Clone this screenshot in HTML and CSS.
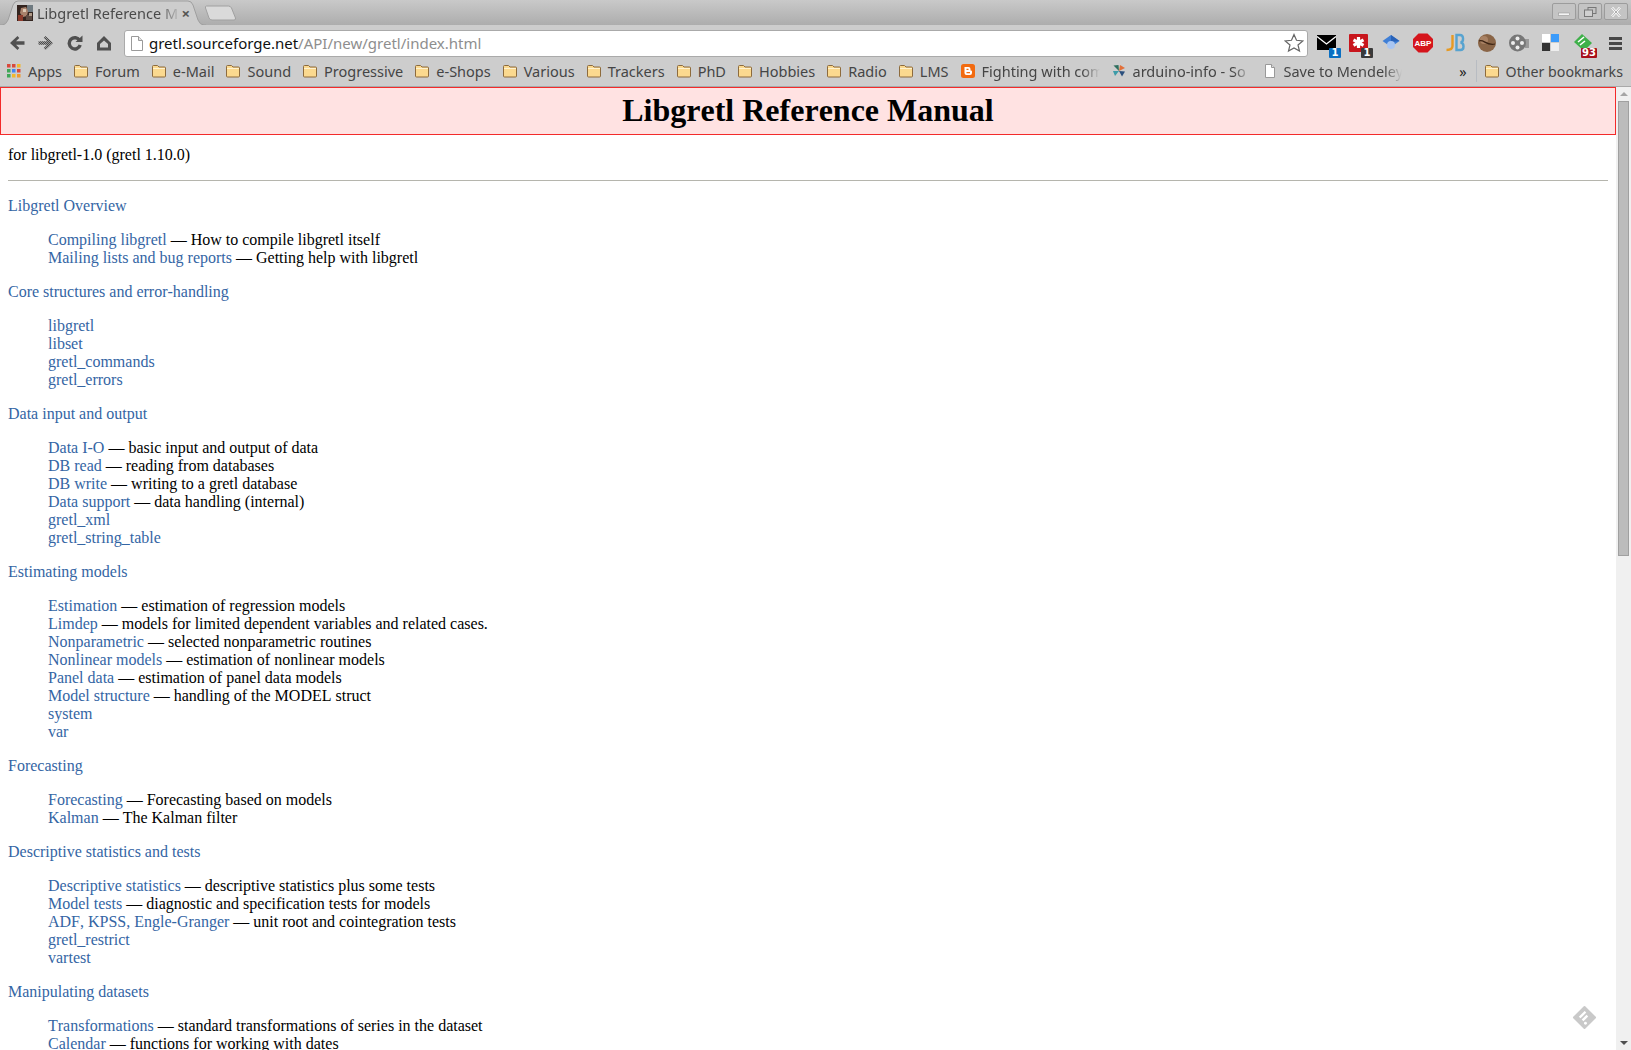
FILE: index.html

```html
<!DOCTYPE html>
<html lang="en">
<head>
  <meta charset="UTF-8" />
  <title>Libgretl Reference Manual</title>
  <link rel="stylesheet" href="styles.css">
</head>
<body>
  <div class="tabstrip">
    <div class="tab">
      <svg class="tab-shape" viewBox="0 0 208 25"><path d="M0 25h2q4 0 6-5l5-15q1.500-4 5-4h170q3.500 0 5 4l5 15q2 5 6 5h2" fill="#cdcdcd" stroke="#9f9f9f"/></svg>
      <svg class="favicon" viewBox="0 0 16 16"><rect width="16" height="16" fill="#33241f"/><rect x="10" width="6" height="7" fill="#6f7a80"/><path d="M4 3l5-1 2 4-1 5-4 1-3-4z" fill="#a9826c"/><rect x="6" y="4" width="3" height="3" fill="#dcc8b4"/><rect x="1" y="10" width="5" height="6" fill="#8c3b2c"/><rect x="9" y="10" width="6" height="5" fill="#5c4a42"/><rect x="12" y="8" width="3" height="3" fill="#b09a88"/></svg>
      <span class="tab-title">Libgretl Reference M</span>
      <span class="tab-close">×</span>
    </div>
    <svg class="newtab" viewBox="0 0 32 16"><path d="M1.500 1h22q2 0 3 2l4 10q.5 2-1.500 2H7q-2 0-3-2L.5 3q-.5-2 1-2z" fill="#dadada" stroke="#a0a0a0"/></svg>
    <div class="winbtns">
      <span class="winbtn"><svg viewBox="0 0 14 10"><rect x="1.500" y="6" width="11" height="2.500" fill="#f4f4f4" stroke="#8a8a8a" stroke-width=".5"/></svg></span>
      <span class="winbtn"><svg viewBox="0 0 14 10"><rect x="5" y=".5" width="8" height="6" fill="none" stroke="#777"/><rect x="1.500" y="3" width="8" height="6.500" fill="#d0d0d0" stroke="#777"/></svg></span>
      <span class="winbtn"><svg viewBox="0 0 14 10"><path d="M3 0.500l8 9M11 0.500l-8 9" stroke="#fff" stroke-width="2.400"/><path d="M3 0.500l8 9M11 0.500l-8 9" stroke="#888" stroke-width=".7"/></svg></span>
    </div>
  </div>

  <div class="toolbar">
    <svg class="navbtn" viewBox="0 0 16 16"><path d="M8.500 1L1 8l7.500 7 1.800-2L7 9.800h8.500V6.200H7L10.300 3z" fill="#505050"/></svg>
    <svg class="navbtn" viewBox="0 0 16 16">
      <defs><pattern id="dither" width="2" height="2" patternUnits="userSpaceOnUse"><rect width="2" height="2" fill="#9c9c9c"/><rect width="1" height="1" fill="#4a4a4a"/><rect x="1" y="1" width="1" height="1" fill="#4a4a4a"/></pattern></defs>
      <path d="M7.500 1L15 8l-7.500 7-1.800-2L9 9.800H.5V6.200H9L5.700 3z" fill="url(#dither)"/>
    </svg>
    <svg class="navbtn" viewBox="0 0 16 16"><path d="M12.700 5.500A5.600 5.600 0 1 0 13.200 10" fill="none" stroke="#505050" stroke-width="3.400"/><path d="M8.500 7h7V.5z" fill="#505050"/></svg>
    <svg class="navbtn" viewBox="0 0 16 16"><path d="M8 1L1 8v7.500h14V8z" fill="#505050"/><path d="M8 5.500L4 9v3.500h8V9z" fill="#cdcdcd"/></svg>
    <div class="omnibox">
      <svg class="page-icon" viewBox="0 0 12 15"><path d="M.5.5h7l4 4v10H.5z" fill="#fff" stroke="#9a9a9a"/><path d="M7.500.5v4h4" fill="#e4e4e4" stroke="#9a9a9a"/></svg>
      <span class="url"><span class="url-host">gretl.sourceforge.net</span>/API/new/gretl/index.html</span>
      <svg class="star" viewBox="0 0 20 20"><path d="M10 1.500l2.500 5.800 6.300.6-4.800 4.100 1.500 6.100L10 15l-5.500 3.100L6 12 1.200 7.900l6.300-.6z" fill="#fff" stroke="#666" stroke-width="1.200"/></svg>
    </div>
    <div class="extensions">
      <span class="ext">
        <svg viewBox="0 0 22 20"><rect x="1" y="2" width="19" height="15" fill="#000"/><path d="M1 3.500l9.500 7.500L20 3.500" fill="none" stroke="#fff" stroke-width="1.300"/></svg>
        <span class="ext-badge badge-blue">1</span>
      </span>
      <span class="ext">
        <svg viewBox="0 0 22 20"><rect x="1" y="1" width="19" height="18" rx="1" fill="#c8161d"/><path d="M10.500 4v11M5.500 6.800l10 5.500M15.500 6.800l-10 5.500" stroke="#fff" stroke-width="3.200"/></svg>
        <span class="ext-badge badge-dark">1</span>
      </span>
      <span class="ext">
        <svg viewBox="0 0 22 20"><path d="M11 2l8.500 6-8.500 6-8.500-6z" fill="#3f7fd6"/><path d="M11 2l8.500 6-8.500 1z" fill="#2a63b8"/><circle cx="11" cy="12" r="4" fill="#a9c6f2"/></svg>
      </span>
      <span class="ext">
        <svg viewBox="0 0 22 20"><path d="M6.500.5h9l5.500 5.500v8l-5.500 5.500h-9L1 14V6z" fill="#d5151c"/><text class="abp" x="11" y="13" text-anchor="middle">ABP</text></svg>
      </span>
      <span class="ext">
        <svg viewBox="0 0 22 20"><path d="M8.500 2v11c0 3-2 4-6 4" fill="none" stroke="#e79a22" stroke-width="2.400"/><path d="M12.500 2v15h4c4 0 4-7 0-7.500 3.500-.5 3.500-7.500-.5-7.500z" fill="none" stroke="#57a3d0" stroke-width="2.400"/></svg>
      </span>
      <span class="ext">
        <svg viewBox="0 0 22 20"><circle cx="11" cy="10" r="9" fill="#8a6547"/><circle cx="8" cy="7" r="4" fill="#a98264"/><path d="M3 8c5-2 7 5 16 3" fill="none" stroke="#3d2414" stroke-width="1.200"/></svg>
      </span>
      <span class="ext">
        <svg viewBox="0 0 22 20"><path d="M15 6h6v9h-4z" fill="#9a9a9a"/><circle cx="9.500" cy="10" r="8.500" fill="#777"/><circle cx="9.500" cy="5.500" r="2" fill="#eee"/><circle cx="9.500" cy="14.500" r="2" fill="#eee"/><circle cx="5" cy="10" r="2" fill="#eee"/><circle cx="14" cy="10" r="2" fill="#eee"/></svg>
      </span>
      <span class="ext">
        <svg viewBox="0 0 22 20"><rect x="2" y="1" width="8" height="8" fill="#fff"/><rect x="11" y="1" width="8" height="8" fill="#3b9bfa"/><rect x="2" y="10" width="8" height="8" fill="#333"/><rect x="11" y="10" width="8" height="8" fill="#eee"/></svg>
      </span>
      <span class="ext">
        <svg viewBox="0 0 22 20"><path d="M10 1l10 9-8 8-10-9z" fill="#3fb04a"/><path d="M6 9l6-5M8 12l5-4" stroke="#fff" stroke-width="1.600"/></svg>
        <span class="ext-badge badge-red">93</span>
      </span>
    </div>
    <div class="hamburger"><span></span><span></span><span></span></div>
  </div>

  <div class="bookmarks">
    <a class="bm">
      <svg class="bm-icon" viewBox="0 0 14 14"><rect width="3.500" height="3.500" fill="#d9483b"/><rect x="5" width="3.500" height="3.500" fill="#d9483b"/><rect x="10" width="3.500" height="3.500" fill="#f1b82d"/><rect y="5" width="3.500" height="3.500" fill="#3fa757"/><rect x="5" y="5" width="3.500" height="3.500" fill="#4285f4"/><rect x="10" y="5" width="3.500" height="3.500" fill="#d9483b"/><rect y="10" width="3.500" height="3.500" fill="#3fa757"/><rect x="5" y="10" width="3.500" height="3.500" fill="#f1b82d"/><rect x="10" y="10" width="3.500" height="3.500" fill="#f19a2d"/></svg>
      Apps
    </a>
    <a class="bm"><svg class="bm-icon"><use href="#folder"/></svg>Forum</a>
    <a class="bm"><svg class="bm-icon"><use href="#folder"/></svg>e-Mail</a>
    <a class="bm"><svg class="bm-icon"><use href="#folder"/></svg>Sound</a>
    <a class="bm"><svg class="bm-icon"><use href="#folder"/></svg>Progressive</a>
    <a class="bm"><svg class="bm-icon"><use href="#folder"/></svg>e-Shops</a>
    <a class="bm"><svg class="bm-icon"><use href="#folder"/></svg>Various</a>
    <a class="bm"><svg class="bm-icon"><use href="#folder"/></svg>Trackers</a>
    <a class="bm"><svg class="bm-icon"><use href="#folder"/></svg>PhD</a>
    <a class="bm"><svg class="bm-icon"><use href="#folder"/></svg>Hobbies</a>
    <a class="bm"><svg class="bm-icon"><use href="#folder"/></svg>Radio</a>
    <a class="bm"><svg class="bm-icon"><use href="#folder"/></svg>LMS</a>
    <a class="bm"><svg class="bm-icon" viewBox="0 0 14 14"><rect width="14" height="14" rx="2.500" fill="#f26a0f"/><path d="M3.500 3h4q2 0 2 2v1.500h.5q1 0 1 1V9q0 2-2 2H5.500q-2 0-2-2z" fill="#fff"/><path d="M5.500 5.300h2M5.500 8.700h3.500" stroke="#f26a0f" stroke-width="1.200"/></svg><span class="bm-fade bm-fade-blog">Fighting with com</span></a>
    <a class="bm"><svg class="bm-icon" viewBox="0 0 14 14"><path d="M7 7L1.500 1.500 6.500 1z" fill="#2f6f5e"/><path d="M7 7l1-6 5 3z" fill="#e2703a"/><path d="M7 7l-6 0 2 5z" fill="#3d9ca8"/><path d="M7 7l6 .5-3 5z" fill="#2b4f7d"/></svg><span class="bm-fade bm-fade-ard">arduino-info - So</span></a>
    <a class="bm"><svg class="bm-icon" viewBox="0 0 14 14"><path d="M2.500.5h6l3 3v10h-9z" fill="#fff" stroke="#999"/><path d="M8.500.5v3h3" fill="#ddd" stroke="#999"/></svg><span class="bm-fade bm-fade-men">Save to Mendeley</span></a>
    <span class="bm-more">»</span>
    <a class="bm bm-other"><svg class="bm-icon"><use href="#folder"/></svg>Other bookmarks</a>
  </div>

  <svg class="defs" width="0" height="0">
    <symbol id="folder" viewBox="0 0 14 14">
      <path d="M1.500 1.500h4l1.500 1.500h5.500q1 0 1 1v8q0 1-1 1h-11q-1 0-1-1V2.500q0-1 1-1z" fill="#fbd98f" stroke="#8d6b3d"/>
      <path d="M1 4.500h12" stroke="#fff2cf"/>
    </symbol>
  </svg>

  <div class="viewport">
    <div class="page">
      <div class="titlebox"><h1>Libgretl Reference Manual</h1></div>
      <div class="content">
        <p class="version">for libgretl-1.0 (gretl 1.10.0)</p>
        <hr>
        <dl class="toc">
          <dt><a>Libgretl Overview</a></dt>
          <dd><dl>
            <dt><a>Compiling libgretl</a> — How to compile libgretl itself</dt>
            <dt><a>Mailing lists and bug reports</a> — Getting help with libgretl</dt>
          </dl></dd>
          <dt><a>Core structures and error-handling</a></dt>
          <dd><dl>
            <dt><a>libgretl</a></dt>
            <dt><a>libset</a></dt>
            <dt><a>gretl_commands</a></dt>
            <dt><a>gretl_errors</a></dt>
          </dl></dd>
          <dt><a>Data input and output</a></dt>
          <dd><dl>
            <dt><a>Data I-O</a> — basic input and output of data</dt>
            <dt><a>DB read</a> — reading from databases</dt>
            <dt><a>DB write</a> — writing to a gretl database</dt>
            <dt><a>Data support</a> — data handling (internal)</dt>
            <dt><a>gretl_xml</a></dt>
            <dt><a>gretl_string_table</a></dt>
          </dl></dd>
          <dt><a>Estimating models</a></dt>
          <dd><dl>
            <dt><a>Estimation</a> — estimation of regression models</dt>
            <dt><a>Limdep</a> — models for limited dependent variables and related cases.</dt>
            <dt><a>Nonparametric</a> — selected nonparametric routines</dt>
            <dt><a>Nonlinear models</a> — estimation of nonlinear models</dt>
            <dt><a>Panel data</a> — estimation of panel data models</dt>
            <dt><a>Model structure</a> — handling of the MODEL struct</dt>
            <dt><a>system</a></dt>
            <dt><a>var</a></dt>
          </dl></dd>
          <dt><a>Forecasting</a></dt>
          <dd><dl>
            <dt><a>Forecasting</a> — Forecasting based on models</dt>
            <dt><a>Kalman</a> — The Kalman filter</dt>
          </dl></dd>
          <dt><a>Descriptive statistics and tests</a></dt>
          <dd><dl>
            <dt><a>Descriptive statistics</a> — descriptive statistics plus some tests</dt>
            <dt><a>Model tests</a> — diagnostic and specification tests for models</dt>
            <dt><a>ADF, KPSS, Engle-Granger</a> — unit root and cointegration tests</dt>
            <dt><a>gretl_restrict</a></dt>
            <dt><a>vartest</a></dt>
          </dl></dd>
          <dt><a>Manipulating datasets</a></dt>
          <dd><dl>
            <dt><a>Transformations</a> — standard transformations of series in the dataset</dt>
            <dt><a>Calendar</a> — functions for working with dates</dt>
          </dl></dd>
        </dl>
      </div>
      <svg class="feedly" viewBox="0 0 26 26"><path d="M13 2l11 11-11 11L2 13z" fill="#c9c9c9" stroke="#c9c9c9" stroke-width="2" stroke-linejoin="round"/><path d="M8 13l6-6M11 16l5-5" stroke="#fff" stroke-width="2.500"/><circle cx="14" cy="19" r="1.500" fill="#fff"/></svg>
    </div>
    <div class="scrollbar">
      <div class="sb-arrow sb-up"></div>
      <div class="sb-track"><div class="sb-thumb"></div></div>
      <div class="sb-arrow sb-down"></div>
    </div>
  </div>
</body>
</html>
```

FILE: styles.css

```css
html, body {
  margin: 0;
  height: 100%;
  overflow: hidden;
}
body {
  display: flex;
  flex-direction: column;
  background: #fff;
  font-family: 'Liberation Serif', serif;
  font-size: 16px;
  color: #000;
}

/* browser chrome */
.tabstrip {
  height: 25px;
  flex: none;
  display: flex;
  align-items: flex-end;
  background: linear-gradient(#c9c9c9, #adadad);
  font-family: 'Noto Sans', sans-serif;
}
.tab {
  width: 208px;
  height: 25px;
  padding: 0 18px 0 17px;
  box-sizing: border-box;
  display: flex;
  align-items: center;
  position: relative;
}
.tab-shape {
  position: absolute;
  left: 0;
  top: 0;
  width: 208px;
  height: 25px;
}
.favicon {
  width: 16px;
  height: 16px;
  margin-right: 4px;
  flex: none;
  position: relative;
}
.tab-title {
  flex: 1;
  position: relative;
  white-space: nowrap;
  font-size: 14.500px;
  color: #4a4a4a;
  -webkit-mask-image: linear-gradient(to right, #000 85%, transparent);
  mask-image: linear-gradient(to right, #000 85%, transparent);
}
.tab-close {
  position: relative;
  font-size: 15px;
  font-weight: 700;
  color: #555;
}
.newtab {
  width: 32px;
  height: 16px;
  margin: 0 0 4px -3px;
}
.winbtns {
  margin-left: auto;
  align-self: flex-start;
  margin-top: 3px;
  margin-right: 3px;
  display: flex;
  gap: 2px;
}
.winbtn {
  width: 24px;
  height: 17px;
  box-sizing: border-box;
  border: 1px solid #9c9c9c;
  border-radius: 2px;
  background: #c4c4c4;
  display: flex;
  align-items: center;
  justify-content: center;
}
.winbtn svg {
  width: 14px;
  height: 10px;
}

.toolbar {
  height: 33px;
  flex: none;
  padding: 3px 0 0 9px;
  box-sizing: border-box;
  display: flex;
  align-items: center;
  background: #cdcdcd;
}
.navbtn {
  width: 16px;
  height: 16px;
  margin-right: 13px;
  flex: none;
}
.omnibox {
  width: 1184px;
  height: 27px;
  margin-left: -1px;
  padding: 0 3px 0 6px;
  box-sizing: border-box;
  background: #fff;
  border: 1px solid #aaa;
  border-radius: 3px;
  display: flex;
  align-items: center;
  font-family: 'Noto Sans', sans-serif;
  font-size: 15px;
  color: #8e8e8e;
}
.page-icon {
  width: 12px;
  height: 15px;
  margin-right: 6px;
}
.url {
  flex: 1;
}
.url-host {
  color: #111;
}
.star {
  width: 20px;
  height: 20px;
}
.extensions {
  display: flex;
  margin-left: 3px;
}
.ext {
  width: 32px;
  height: 26px;
  position: relative;
  display: flex;
  align-items: center;
  justify-content: center;
}
.ext svg {
  width: 22px;
  height: 20px;
}
.abp {
  font: 700 8px 'Liberation Sans', sans-serif;
  fill: #fff;
}
.ext-badge {
  position: absolute;
  right: 2px;
  bottom: -2px;
  min-width: 10px;
  height: 10px;
  padding: 0 1px;
  font: 700 10px/10px 'DejaVu Sans', sans-serif;
  color: #fff;
  text-align: center;
  border-radius: 1px;
}
.badge-blue { background: #0a6fc2; }
.badge-dark { background: #3a3a3a; }
.badge-red { background: #a8101c; }
.hamburger {
  margin-left: 10px;
  display: flex;
  flex-direction: column;
  gap: 2px;
}
.hamburger span {
  width: 13px;
  height: 3px;
  background: #484848;
  display: block;
}

.bookmarks {
  height: 29px;
  flex: none;
  display: flex;
  align-items: center;
  gap: 12px;
  background: #cdcdcd;
  border-bottom: 1px solid #a9a9a9;
  padding: 0 0 2px 7px;
  box-sizing: border-box;
  font-family: 'Noto Sans', sans-serif;
  font-size: 14.500px;
  white-space: nowrap;
}
.bm {
  display: flex;
  align-items: center;
  gap: 7px;
  color: #454545;
}
.bm-icon {
  width: 14px;
  height: 14px;
  flex: none;
}
.bm-fade {
  display: block;
  -webkit-mask-image: linear-gradient(to right, #000 85%, transparent);
  mask-image: linear-gradient(to right, #000 85%, transparent);
}
.bm-fade-blog { width: 118px; }
.bm-fade-ard { width: 118px; }
.bm-fade-men { width: 118px; }
.bm-more {
  margin-left: auto;
  color: #222;
  padding-right: 9px;
  border-right: 1px solid #b8bcc2;
  height: 22px;
  line-height: 22px;
}
.bm-other {
  margin-left: -4px;
  padding-right: 8px;
  font-size: 14.200px;
}
.defs {
  position: absolute;
}

/* page */
.viewport {
  flex: 1;
  min-height: 0;
  display: flex;
}
.page {
  flex: 1;
  min-width: 0;
  overflow: hidden;
  position: relative;
  font-kerning: none;
}
.titlebox {
  background: #ffe2e2;
  border: 1px solid #f32a2a;
  height: 48px;
  padding-bottom: 2px;
  box-sizing: border-box;
  display: flex;
  align-items: center;
  justify-content: center;
}
.titlebox h1 {
  margin: 0;
  font-size: 32px;
  font-weight: 700;
}
.content {
  padding: 0 8px;
}
.version {
  margin: 11px 0 16px;
}
hr {
  margin: 0;
  border: none;
  border-top: 1px solid #b5b5ad;
}
.toc {
  margin: 16px 0;
}
.toc dl {
  margin: 16px 0;
}
.toc dd {
  margin-left: 40px;
}
.toc dt {
  line-height: 18px;
}
.toc a {
  color: #3465a4;
  text-decoration: none;
}
.feedly {
  position: absolute;
  right: 19px;
  bottom: 20px;
  width: 25px;
  height: 25px;
}

.scrollbar {
  width: 15px;
  flex: none;
  background: #f0f0f0;
  display: flex;
  flex-direction: column;
}
.sb-arrow {
  height: 14px;
  flex: none;
  position: relative;
}
.sb-up::after, .sb-down::after {
  content: "";
  position: absolute;
  left: 4px;
  top: 5px;
  border-left: 4px solid transparent;
  border-right: 4px solid transparent;
}
.sb-up::after { border-bottom: 4px solid #a5a5a5; }
.sb-down::after { border-top: 4px solid #505050; }
.sb-track {
  flex: 1;
}
.sb-thumb {
  height: 455px;
  margin: 0 2px;
  background: #bcbcbc;
  border: 1px solid #a0a0a0;
  box-sizing: border-box;
}
```
